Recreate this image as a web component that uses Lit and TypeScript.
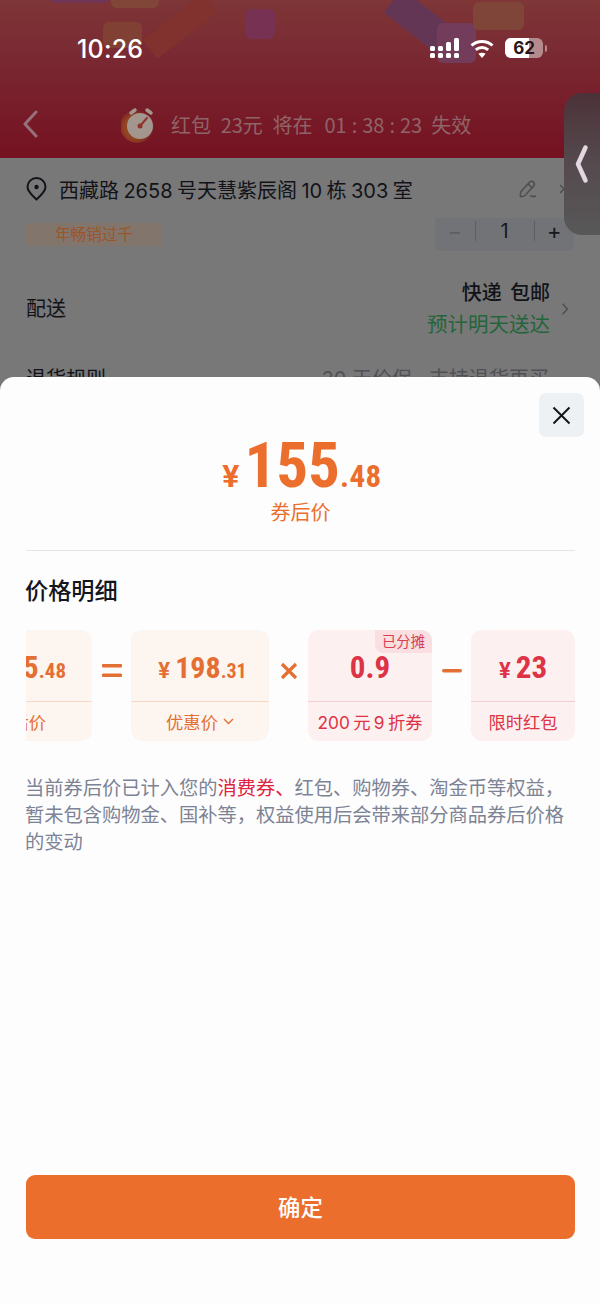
import { LitElement, html, css } from "lit";
import { customElement } from "lit/decorators.js";

@customElement("app-root")
export class AppRoot extends LitElement {
  static styles = css`
    :host {
      display: block;
      position: relative;
      width: 600px;
      height: 1304px;
      overflow: hidden;
      background: #787878;
      font-family: "Inter", "Noto Sans CJK SC", "Noto Sans", sans-serif;
    }
    .hero {
      position: relative;
      height: 158px;
      box-sizing: border-box;
      padding-top: 34px;
      overflow: hidden;
      background: linear-gradient(180deg, #7e3637 0%, #7a2b33 30%, #751121 100%);
    }
    .chip {
      position: absolute;
      border-radius: 6px;
    }
    .ribbon {
      position: absolute;
      left: 408px;
      top: -14px;
      width: 30px;
      height: 76px;
      background: #633655;
      transform: rotate(-52deg);
    }
    .ribbon.warm {
      left: 168px;
      top: -12px;
      width: 24px;
      height: 76px;
      background: #81312e;
      transform: rotate(52deg);
    }
    .status {
      position: relative;
      display: flex;
      align-items: center;
      justify-content: space-between;
      height: 30px;
      padding: 0 53px 0 77px;
    }
    .time {
      color: #fff;
      font-size: 25px;
      font-weight: 500;
      letter-spacing: 0.2px;
      font-family: "Inter", sans-serif;
    }
    .status-icons {
      display: flex;
      align-items: center;
      gap: 11px;
      margin-bottom: 2px;
    }
    .battery {
      position: relative;
      width: 38px;
      height: 20px;
      border-radius: 6px;
      overflow: hidden;
      background: #b58a8d;
      display: flex;
      align-items: center;
      justify-content: center;
      font: 700 17px "Inter", sans-serif;
      color: #2a1518;
    }
    .battery::before {
      content: "";
      position: absolute;
      inset: 0 14px 0 0;
      background: #fff;
    }
    .battery span {
      position: relative;
    }
    .nub {
      width: 2px;
      height: 7px;
      margin-left: -9px;
      border-radius: 0 2px 2px 0;
      background: #b58a8d;
    }
    .nav {
      position: relative;
      display: flex;
      align-items: center;
      height: 40px;
      margin-top: 40px;
      padding-left: 22px;
    }
    .back {
      flex: none;
      width: 16px;
      height: 28px;
    }
    .timer {
      display: flex;
      align-items: center;
      margin-left: 83px;
      color: #8f6468;
      font-size: 20px;
      white-space: nowrap;
    }
    .timer svg {
      margin-right: 14px;
    }
    .timer .lead {
      word-spacing: 4px;
    }
    .timer .digits {
      font-family: "Noto Sans CJK SC", sans-serif;
    }
    .timer .clock {
      display: flex;
      gap: 5px;
      margin: 0 9px 0 12px;
      font-family: "Noto Sans CJK SC", sans-serif;
    }
    .page {
      color: #121318;
      font-size: 20px;
    }
    .addr {
      display: flex;
      align-items: center;
      height: 62px;
      padding-left: 26px;
      white-space: nowrap;
    }
    .addr .pin {
      flex: none;
      margin-right: 12px;
    }
    .addr .label {
      word-spacing: -1.2px;
      width: 355px;
    }
    .addr .edit {
      flex: none;
      margin-left: 105px;
    }
    .addr .more {
      flex: none;
      margin-left: 22px;
    }
    .meta {
      display: flex;
      justify-content: space-between;
      height: 51px;
    }
    .tag {
      width: 136px;
      height: 23px;
      margin: 3px 0 0 26px;
      border-radius: 3px;
      background: #82756c;
      color: #9c5527;
      font-size: 15.6px;
      line-height: 23px;
      text-align: center;
    }
    .stepper {
      display: flex;
      align-items: center;
      width: 139px;
      height: 33px;
      margin: -2px 26px 0 0;
      border-radius: 0 0 6px 6px;
      background: #727376;
      color: #17181c;
      font-size: 22px;
      box-sizing: border-box;
      padding-bottom: 8px;
    }
    .stepper span {
      flex: 1;
      text-align: center;
      line-height: 20px;
    }
    .stepper .mid {
      flex: 0 0 58px;
      border-left: 1px solid #5e5f62;
      border-right: 1px solid #5e5f62;
      font-size: 20px;
    }
    .stepper .off {
      color: #5e5f62;
    }
    .delivery {
      display: flex;
      align-items: center;
      justify-content: space-between;
      height: 76px;
      padding: 0 32px 0 26px;
    }
    .delivery .label {
      margin-bottom: 3px;
    }
    .delivery .right {
      display: flex;
      align-items: center;
      gap: 12px;
    }
    .delivery .lines {
      text-align: right;
      line-height: 32px;
    }
    .delivery .strong {
      font-weight: 500;
      word-spacing: 3px;
    }
    .delivery .green {
      color: #24653a;
      font-size: 20.5px;
    }
    .peek {
      display: flex;
      justify-content: space-between;
      padding: 16px 51px 0 26px;
      font-size: 20px;
    }
    .peek .dim {
      color: #505055;
    }
    .handle {
      position: absolute;
      right: 0;
      top: 93px;
      width: 36px;
      height: 142px;
      border-radius: 18px 0 0 18px;
      background: linear-gradient(180deg, #4b3238 0%, #554a4e 50%, #585859 100%);
      display: flex;
      align-items: center;
      padding: 0 0 1px 11px;
      box-sizing: border-box;
    }
    .sheet {
      position: absolute;
      left: 0;
      right: 0;
      top: 377px;
      bottom: 0;
      box-sizing: border-box;
      padding: 0 25px 0 26px;
      border-radius: 14px 14px 0 0;
      background: #fdfdfd;
      display: flex;
      flex-direction: column;
    }
    .close {
      position: absolute;
      right: 16px;
      top: 16px;
      width: 45px;
      height: 44px;
      border-radius: 7px;
      background: #eef1f4;
      display: flex;
      align-items: center;
      justify-content: center;
    }
    .total {
      display: flex;
      flex-direction: column;
      align-items: center;
      height: 174px;
      box-sizing: border-box;
      padding: 51px 0 0;
      border-bottom: 1px solid #e6e6e8;
      color: #ec6e2c;
    }
    .amount {
      display: flex;
      align-items: baseline;
      height: 76px;
      padding-left: 3px;
    }
    .num {
      font-family: "Roboto", sans-serif;
      font-weight: 700;
      font-stretch: 77%;
    }
    .yen {
      font-family: "Roboto", sans-serif;
      font-weight: 700;
    }
    .total .yen {
      font-size: 32px;
      margin-right: 5px;
    }
    .total .big {
      font-size: 63px;
      line-height: 76px;
    }
    .total .small {
      font-size: 31px;
      letter-spacing: 0.5px;
    }
    .total .sub {
      font-size: 20px;
      line-height: 24px;
      margin-top: -3px;
    }
    h2 {
      margin: 26px 0 25px -1px;
      font-size: 23.2px;
      line-height: 28px;
      font-weight: 500;
      color: #14151d;
    }
    .formula {
      display: flex;
      align-items: flex-start;
      height: 111px;
    }
    .cell {
      position: relative;
      flex: none;
      box-sizing: border-box;
      height: 111px;
      border-radius: 11px;
      display: flex;
      flex-direction: column;
      overflow: hidden;
    }
    .cell.orange {
      background: #fcf5f0;
      color: #e46f33;
      --rule: #f6d9c6;
    }
    .cell.red {
      background: #fcf0f1;
      color: #de3346;
      --rule: #f1cfd3;
    }
    .cell .val {
      flex: none;
      height: 72px;
      box-sizing: border-box;
      border-bottom: 1px solid var(--rule);
      display: flex;
      align-items: baseline;
      justify-content: center;
      line-height: 76px;
    }
    .cell .cap {
      flex: 1;
      display: flex;
      align-items: center;
      justify-content: center;
      font-size: 17.3px;
      gap: 5px;
      word-spacing: -1.5px;
      white-space: nowrap;
      padding-bottom: 1px;
    }
    .cell .yen {
      font-size: 22px;
      margin-right: 5px;
    }
    .cell .big {
      font-size: 31px;
    }
    .cell .small {
      font-size: 21px;
    }
    .cell.cut {
      width: 66px;
      border-radius: 0 11px 11px 0;
    }
    .cell.cut .val {
      justify-content: flex-end;
      padding-right: 26px;
    }
    .cell.cut .cap {
      justify-content: flex-end;
      padding-right: 46px;
    }
    .cell.base {
      width: 138px;
    }
    .cell.base .val {
      padding-left: 5px;
    }
    .cell.base .big {
      font-size: 30px;
    }
    .cell.base .small {
      font-size: 20px;
    }
    .cell.coupon {
      width: 124px;
    }
    .cell.bonus {
      width: 104px;
    }
    .badge {
      position: absolute;
      right: 0;
      top: 0;
      width: 57px;
      height: 23px;
      border-radius: 0 0 0 8px;
      background: #f9dfe2;
      color: #d7414f;
      font-size: 14.3px;
      line-height: 23px;
      text-align: center;
    }
    .op {
      flex: none;
      width: 39px;
      height: 81px;
      display: flex;
      align-items: center;
      justify-content: center;
    }
    .note {
      margin: 34px 0 0 -1px;
      color: #7c8395;
      font-size: 19.25px;
      line-height: 27px;
      white-space: nowrap;
    }
    .note em {
      font-style: normal;
      color: #df2342;
    }
    .spacer {
      flex: 1;
    }
    .confirm {
      height: 64px;
      margin-bottom: 65px;
      border-radius: 9px;
      background: #ec6e2c;
      color: #fff;
      font-size: 22.4px;
      font-weight: 500;
      display: flex;
      align-items: center;
      justify-content: center;
      padding-bottom: 2px;
      box-sizing: border-box;
    }
  `;

  private price(big: string, small: string) {
    return html`<span class="yen">¥</span><span class="num big">${big}</span
      ><span class="num small">${small}</span>`;
  }

  render() {
    return html`
      <div class="hero">
        <div class="ribbon warm"></div>
        <div class="ribbon"></div>
        <div class="chip" style="left:50px;top:-6px;width:59px;height:9px;background:#713656"></div>
        <div class="chip" style="left:111px;top:-6px;width:48px;height:14px;background:#824638"></div>
        <div class="chip" style="left:103px;top:22px;width:39px;height:26px;background:#804034"></div>
        <div class="chip" style="left:245px;top:9px;width:30px;height:30px;background:#763153"></div>
        <div class="chip" style="left:437px;top:23px;width:39px;height:40px;background:#723c5a"></div>
        <div class="chip" style="left:473px;top:2px;width:51px;height:28px;background:#804539"></div>
        <div class="status">
          <span class="time">10:26</span>
          <div class="status-icons">
            <svg width="29" height="20" viewBox="0 0 29 20" fill="#fff">
              <rect x="0" y="8" width="5" height="5" rx="1.500" /><rect x="0" y="15" width="5" height="5" rx="1.500" />
              <rect x="8" y="8" width="5" height="5" rx="1.500" /><rect x="8" y="15" width="5" height="5" rx="1.500" />
              <rect x="16" y="4" width="5" height="9" rx="1.500" /><rect x="16" y="15" width="5" height="5" rx="1.500" />
              <rect x="24" y="0" width="5" height="13" rx="1.500" /><rect x="24" y="15" width="5" height="5" rx="1.500" />
            </svg>
            <svg width="24" height="19" viewBox="0 0 24 19" fill="none" stroke="#fff" stroke-width="3">
              <path d="M1.500 6.500c6-5.300 15-5.300 21 0" />
              <path d="M5.800 10.800c3.600-3 8.800-3 12.400 0" />
              <path d="M12 19l-3.600-4.200c2-1.500 5.200-1.500 7.200 0z" fill="#fff" stroke="none" />
            </svg>
            <div class="battery"><span>62</span></div>
            <div class="nub"></div>
          </div>
        </div>
        <div class="nav">
          <svg class="back" viewBox="0 0 16 28" fill="none" stroke="#96717a" stroke-width="3" stroke-linecap="round" stroke-linejoin="round">
            <path d="M14 2L3 14l11 12" />
          </svg>
          <div class="timer">
            <svg width="36" height="38" viewBox="0 0 36 38">
              <defs>
                <radialGradient id="halo" cx="0.45" cy="0.55" r="0.55">
                  <stop offset="0.6" stop-color="#934422" />
                  <stop offset="1" stop-color="#771c26" />
                </radialGradient>
              </defs>
              <circle cx="16" cy="21" r="17" fill="url(#halo)" />
              <path d="M10 8l4-3M30 8l-4-3" stroke="#a4968f" stroke-width="3.500" stroke-linecap="round" />
              <circle cx="19" cy="21" r="13" fill="#a3968f" />
              <path d="M19 21l7-8" stroke="#8e342c" stroke-width="2" stroke-linecap="round" />
              <circle cx="19" cy="21" r="2.500" fill="#8e342c" />
            </svg>
            <span class="lead">红包 <span class="digits">23</span>元 将在</span>
            <span class="clock"><span>01</span><span>:</span><span>38</span><span>:</span><span>23</span></span>
            <span>失效</span>
          </div>
        </div>
      </div>

      <div class="page">
        <div class="addr">
          <svg class="pin" width="21" height="24" viewBox="0 0 21 24" fill="none" stroke="#121318" stroke-width="2">
            <path d="M10.500 22.500C5 17.500 1.500 14 1.500 10a9 9 0 0 1 18 0c0 4-3.500 7.500-9 12.500z" />
            <circle cx="10.500" cy="10" r="2.200" fill="#121318" stroke="none" />
          </svg>
          <span class="label">西藏路 2658 号天慧紫辰阁 10 栋 303 室</span>
          <svg class="edit" width="18" height="18" viewBox="0 0 18 18" fill="none" stroke="#4c4d51" stroke-width="1.500">
            <path d="M2 11.500L10.500 2.200c1.200-1.200 2.800-1.200 4 0s1.200 2.800 0 4L6 15.500c-1 .8-3 1.200-4.500 1 -.3-1.500 0-3.800.5-5z" />
            <path d="M9 4l4.500 4M11 16.500c1.500-1 2-.2 3 0s2 0 3-.5" />
          </svg>
          <svg class="more" width="10" height="12" viewBox="0 0 10 12" fill="none" stroke="#4c4d51" stroke-width="1.500">
            <path d="M1 2l8 8M9 2l-8 8" />
          </svg>
        </div>
        <div class="meta">
          <div class="tag">年畅销过千</div>
          <div class="stepper">
            <span class="off">−</span><span class="mid">1</span><span>+</span>
          </div>
        </div>
        <div class="delivery">
          <span class="label">配送</span>
          <div class="right">
            <div class="lines">
              <div class="strong">快递 包邮</div>
              <div class="green">预计明天送达</div>
            </div>
            <svg width="6" height="12" viewBox="0 0 6 12" fill="none" stroke="#4c4d51" stroke-width="1.300">
              <path d="M.7.7L5.300 6 .7 11.300" />
            </svg>
          </div>
        </div>
        <div class="peek"><span>退货规则</span><span class="dim">30 天价保 · 支持退货再买</span></div>
      </div>

      <div class="handle">
        <svg width="14" height="42" viewBox="0 0 14 42" fill="none" stroke="#e4d8e0" stroke-width="4.500" stroke-linecap="round" stroke-linejoin="round">
          <path d="M10.500 4.500L3 21l7.500 16.500" />
        </svg>
      </div>

      <div class="sheet">
        <div class="close">
          <svg width="19" height="19" viewBox="0 0 19 19" fill="none" stroke="#14151d" stroke-width="2">
            <path d="M1.500 1.500l16 16M17.500 1.500l-16 16" />
          </svg>
        </div>
        <div class="total">
          <div class="amount">${this.price("155", ".48")}</div>
          <div class="sub">券后价</div>
        </div>
        <h2>价格明细</h2>
        <div class="formula">
          <div class="cell orange cut">
            <div class="val"><span class="num big">155</span><span class="num small">.48</span></div>
            <div class="cap">券后价</div>
          </div>
          <div class="op">
            <svg width="20" height="13" viewBox="0 0 20 13" fill="#e46f33"><rect width="20" height="3.500" rx="1" /><rect y="9.500" width="20" height="3.500" rx="1" /></svg>
          </div>
          <div class="cell orange base">
            <div class="val">${this.price("198", ".31")}</div>
            <div class="cap">
              优惠价
              <svg width="11" height="7" viewBox="0 0 11 7" fill="none" stroke="#e46f33" stroke-width="1.400"><path d="M1 1l4.500 4.500L10 1" /></svg>
            </div>
          </div>
          <div class="op">
            <svg width="18" height="18" viewBox="0 0 18 18" fill="none" stroke="#e46f33" stroke-width="3.200"><path d="M2 2l14 14M16 2L2 16" /></svg>
          </div>
          <div class="cell red coupon">
            <div class="badge">已分摊</div>
            <div class="val"><span class="num big">0.9</span></div>
            <div class="cap">200 元 9 折券</div>
          </div>
          <div class="op">
            <svg width="20" height="4" viewBox="0 0 20 4" fill="#e46f33"><rect width="20" height="3.500" rx="1.700" /></svg>
          </div>
          <div class="cell red bonus">
            <div class="val"><span class="yen">¥</span><span class="num big">23</span></div>
            <div class="cap">限时红包</div>
          </div>
        </div>
        <p class="note">
          当前券后价已计入您的<em>消费券、</em>红包、购物券、淘金币等权益，<br />暂未包含购物金、国补等，权益使用后会带来部分商品券后价格<br />的变动
        </p>
        <div class="spacer"></div>
        <div class="confirm">确定</div>
      </div>
    `;
  }
}
